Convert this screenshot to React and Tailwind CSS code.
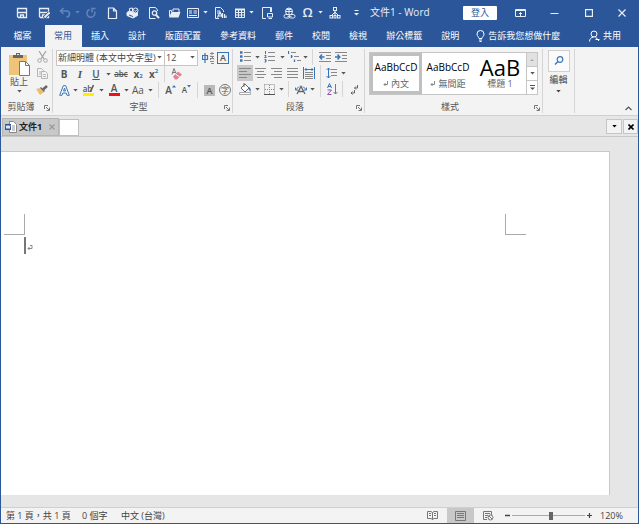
import React, { useState } from "react";
import clsx from "clsx";

const Svg = ({ w = 12, h = 12, className, children }) => (
  <svg
    width={w}
    height={h}
    viewBox={`0 0 ${w} ${h}`}
    fill="none"
    stroke="currentColor"
    aria-hidden="true"
    className={clsx("shrink-0", className)}
  >
    {children}
  </svg>
);

const Caret = () => (
  <Svg w={5} h={3}>
    <path d="M.3 0h4.400L2.500 2.600z" fill="currentColor" stroke="none" />
  </Svg>
);

// Button that centres its icon in a slot of the given width
const Tool = ({ label, className, children, ...props }) => (
  <button
    type="button"
    aria-label={label}
    title={label}
    className={clsx("flex shrink-0 items-center justify-center", className)}
    {...props}
  >
    {children}
  </button>
);

const Drop = ({ className = "w-2", label = "更多選項" }) => (
  <Tool label={label} className={clsx("h-4", className)}>
    <Caret />
  </Tool>
);

const Sep = ({ className }) => <div className={clsx("h-4 w-px shrink-0 bg-[#d5d5d5]", className)} />;

/* ---------- title bar ---------- */

const Save = ({ pen }) => (
  <Svg>
    <path d="M1.500 1.500h9v9h-8l-1-1z" strokeWidth="1.300" />
    <path d="M2 5.500h8M4.500 10.500v-2.500h3v2.500" strokeWidth="1.300" />
    {pen && <path d="M6 11l5.500-5.500" stroke="#2b579a" strokeWidth="3.500" />}
    {pen && <path d="M6.500 10.500l5-5" strokeWidth="1.800" />}
  </Svg>
);

const DocLines = () => (
  <Svg w={13}>
    <path d="M5 11.500H1.500V.5h5l3 3V5M3 4h3M3 6h2" />
    <path d="M3.500 10.500L6 5l2.500 5.500M4.500 9h3M8.500 6v5M10.500 7v4M12 8.500V11" strokeWidth="1.200" />
  </Svg>
);

function TitleBar() {
  return (
    <header className="flex h-6 shrink-0 items-center bg-[#2b579a] pl-[10px] pt-px text-[#e9eef6]">
      <Tool label="儲存檔案" className="w-[22px]"><Save /></Tool>
      <Tool label="另存新檔" className="w-[22px]"><Save pen /></Tool>
      <Tool label="復原" className="w-[19px] text-[#6485b8]">
        <Svg>
          <path d="M4.500 1L1.500 4l3 3M2 4h5.500a3 3 0 0 1 0 6" strokeWidth="1.500" />
        </Svg>
      </Tool>
      <Tool label="復原清單" className="w-[6px] text-[#6485b8]"><Caret /></Tool>
      <Tool label="取消復原" className="w-[21px] text-[#6485b8]">
        <Svg>
          <path d="M9.500 4.500a4 4 0 1 1-5-2M10.500 1.500H7v4" strokeWidth="1.500" />
        </Svg>
      </Tool>
      <Tool label="新增" className="w-[21px]">
        <Svg><path d="M2.500 1h5l3 3v7.500h-8zM7.500 1v3h3" strokeWidth="1.200" /></Svg>
      </Tool>
      <Tool label="快速列印" className="w-[21px]">
        <Svg w={13}>
          <path d="M1 5.500l2.500-1.500 6 2 2-1v3.500L7 11 1 8.500z" fill="currentColor" />
          <path d="M3.500 4V1.500L6.500 1v3.500" />
          <circle cx="9.500" cy="3.500" r="2.500" fill="#2b579a" />
          <path d="M8.300 3.500l1 1 1.700-2" />
          <path d="M3 8l4 1.500" stroke="#2b579a" />
        </Svg>
      </Tool>
      <Tool label="預覽列印" className="w-[22px]">
        <Svg>
          <path d="M9.500 4V3L7.500 .5h-6v11h6" />
          <circle cx="6.500" cy="6" r="2.200" strokeWidth="1.300" />
          <path d="M8 7.800l3 3.400" strokeWidth="2" />
        </Svg>
      </Tool>
      <Tool label="開啟" className="w-[19px]">
        <Svg w={13}>
          <path d="M1.500 9.500v-6h2V5M5 4.500V2h6v3" />
          <path d="M1 10.500L3.500 5H12.500l-2 5.500z" fill="currentColor" stroke="none" />
        </Svg>
      </Tool>
      <Tool label="版面" className="w-[18px]">
        <Svg>
          <path d="M.5 1.500h11v9H.5z" />
          <path d="M2 4h3M2 6h3M2 8.500h8M6.500 4H10M6.500 6H10" />
        </Svg>
      </Tool>
      <Drop className="w-[7px]" />
      <Tool label="文件樣式" className="w-[22px]"><DocLines /></Tool>
      <Tool label="表格" className="w-[17px]">
        <Svg>
          <path d="M1.500 2.500h9v8h-9zM1.500 5.500h9M1.500 8h9M4.500 3v8M7.500 3v8" />
          <path d="M1 2.500h10" strokeWidth="2" />
        </Svg>
      </Tool>
      <Drop className="w-[7px]" />
      <Tool label="插入物件" className="w-[24px]">
        <Svg w={13}>
          <path d="M5 11.500H1.500V.5h8V5M9.500 .5h1V5" />
          <path d="M6.500 6.500h5v3.500h-5zM7.500 11.500h3.500" />
        </Svg>
      </Tool>
      <Tool label="超連結" className="w-[20px]">
        <Svg w={13}>
          <circle cx="6" cy="4.500" r="3.500" />
          <path d="M2.500 4.500h7M6 1v7M3.500 2.500h5" />
          <rect x="1" y="7.500" width="6" height="3.500" rx="1.700" fill="#2b579a" />
          <rect x="6" y="7.500" width="6" height="3.500" rx="1.700" fill="#2b579a" />
          <path d="M4.500 9.300h4" />
        </Svg>
      </Tool>
      <Tool label="符號" className="w-[17px] text-[13px] font-semibold leading-none">Ω</Tool>
      <Drop className="w-[9px]" />
      <Tool label="組織圖" className="w-[20px]">
        <Svg>
          <rect x="4.500" y=".5" width="3" height="3" />
          <path d="M6 4v2.500M6 5L2.500 8.500M6 5l3.500 3.500M6 6v2.500" />
          <rect x="1" y="8.500" width="2.500" height="2.500" />
          <rect x="5" y="8.500" width="2" height="2.500" />
          <rect x="8.500" y="8.500" width="2.500" height="2.500" />
        </Svg>
      </Tool>
      <Tool label="自訂快速存取工具列" className="w-[22px]">
        <Svg w={5} h={6}>
          <path d="M.5 .5h4" />
          <path d="M0 3h5L2.500 5.500z" fill="currentColor" stroke="none" />
        </Svg>
      </Tool>
      <h1 className="ml-[3px] shrink-0 whitespace-nowrap text-[10px]">文件1 - Word</h1>
      <button type="button" className="ml-auto h-[14px] w-[34px] shrink-0 rounded-[1px] bg-white text-[9px] leading-[14px] text-[#2b579a]">
        登入
      </button>
      <Tool label="功能區顯示選項" className="ml-[7px] w-[33px]">
        <Svg w={11} h={8}>
          <path d="M.5 .5h10v7H.5zM.5 1.500h10M5.500 7V3.500M4 5l1.500-1.500L7 5" />
        </Svg>
      </Tool>
      <Tool label="最小化" className="w-[35px]">
        <Svg w={9} h={8}><path d="M.5 4.500h8" /></Svg>
      </Tool>
      <Tool label="最大化" className="w-[33px]">
        <Svg w={8} h={8}><path d="M.5 .5h7v7h-7z" strokeWidth="1.300" /></Svg>
      </Tool>
      <Tool label="關閉" className="w-[33px]">
        <Svg w={8} h={8}><path d="M.5 .5l7 7M7.500 .5l-7 7" strokeWidth="1.200" /></Svg>
      </Tool>
    </header>
  );
}

/* ---------- ribbon tabs ---------- */

const TABS = ["常用", "插入", "設計", "版面配置", "參考資料", "郵件", "校閱", "檢視", "辦公標籤", "說明"];

function RibbonTabs() {
  const [active, setActive] = useState("常用");
  return (
    <nav className="flex h-[23px] shrink-0 items-stretch bg-[#2b579a] pt-px text-[9px] text-white">
      <button type="button" className="w-11 shrink-0 pr-px">檔案</button>
      {TABS.map((tab) => (
        <button
          key={tab}
          type="button"
          onClick={() => setActive(tab)}
          className={clsx(
            "shrink-0 whitespace-nowrap pl-[9px] pr-[10px]",
            tab === active && "bg-[#f3f3f3] text-[#2b579a]"
          )}
        >
          {tab}
        </button>
      ))}
      <button type="button" className="ml-[7px] flex shrink-0 items-center gap-[3px] whitespace-nowrap">
        <Svg w={9} h={12}>
          <path d="M3 8.500C3 7 1 6.300 1 4a3.500 3.500 0 0 1 7 0c0 2.300-2 3-2 4.500zM3 10h3M3.500 11.500h2" />
        </Svg>
        告訴我您想做什麼
      </button>
      <button type="button" className="ml-auto mr-[17px] flex shrink-0 items-center gap-[3px]">
        <Svg w={11} h={12}>
          <circle cx="5" cy="4" r="3" />
          <path d="M.5 11.500c0-2.500 1.500-4 4-4.500M6.500 7l3.500 4M6.500 9.500h4" />
        </Svg>
        共用
      </button>
    </nav>
  );
}

/* ---------- ribbon ---------- */

const Launcher = () => (
  <Svg w={6} h={6} className="text-[#777]">
    <path d="M.5 4V.5H4M2 2l3 3M5.500 2.500v3h-3" />
  </Svg>
);

const Group = ({ name, launcher = true, className, children }) => (
  <section
    aria-label={name}
    className={clsx("flex shrink-0 flex-col border-r border-[#d5d5d5] text-[#555]", className)}
  >
    <div className="h-[52px]">{children}</div>
    <div className="flex h-[13px] items-center text-[9px] leading-3">
      <span className="flex-1 pr-0.5 text-center">{name}</span>
      {launcher && <Tool label={`${name}設定`} className="mr-px w-2 pt-0.5"><Launcher /></Tool>}
    </div>
  </section>
);

const Row = ({ children }) => <div className="flex h-4 items-center leading-3">{children}</div>;

function ClipboardGroup() {
  return (
    <Group name="剪貼簿" className="w-[52px]">
      <div className="flex">
        <button type="button" className="flex w-9 flex-col items-center pt-1 text-[9px] leading-3">
          <Svg w={23} h={23}>
            <path d="M1 2h18v20H1z" fill="#eec477" stroke="none" />
            <path d="M5 2h3V0h4v2h3v3H5z" fill="#666" stroke="none" />
            <path d="M9 1.500h2" stroke="#f3f3f3" />
            <path d="M11.500 8.500h6l4 4v10h-10z" fill="#fff" stroke="#777" />
            <path d="M17.500 8.500v4h4" stroke="#777" />
          </Svg>
          貼上
          <span className="pt-0.5"><Caret /></span>
        </button>
        <div className="flex flex-col">
          <Tool label="剪下" className="h-4 w-[10px] text-[#a5a5a5]">
            <Svg w={11}>
              <path d="M2 0l5 8M9 0L4 8" strokeWidth="1.300" />
              <circle cx="2.500" cy="9.500" r="1.800" />
              <circle cx="8.500" cy="9.500" r="1.800" />
            </Svg>
          </Tool>
          <Tool label="複製" className="h-4 w-[10px] text-[#b5b5b5]">
            <Svg w={11} h={11}>
              <path d="M.5 .5h4l2 2v6h-6zM2 4h3M2 6h3" />
              <path d="M4.500 3.500h4l2 2v5h-6z" fill="#f3f3f3" />
              <path d="M6 6.500h3M6 8.500h3" />
            </Svg>
          </Tool>
          <Tool label="複製格式" className="h-[18px] w-[10px]">
            <Svg w={12} h={10}>
              <path d="M0 4l4-1 4 4-4 3z" fill="#eebd6b" stroke="none" />
              <path d="M4.500 2.500l4 4" stroke="#666" strokeWidth="1.500" />
              <path d="M7 4.500L11 1" stroke="#666" strokeWidth="2.500" />
            </Svg>
          </Tool>
        </div>
      </div>
    </Group>
  );
}

const FONTS = ["新細明體 (本文中文字型)", "標楷體"];
const SIZES = ["10", "12", "14"];

const Combo = ({ label, options, value, className }) => (
  <label className={clsx("relative flex h-4 items-center border border-[#c6c6c6] bg-white", className)}>
    <span className="sr-only">{label}</span>
    <select
      defaultValue={value}
      className="h-full w-full appearance-none bg-transparent pl-px text-[9px] leading-[14px] text-[#444] outline-none"
    >
      {options.map((o) => (
        <option key={o}>{o}</option>
      ))}
    </select>
    <span className="pointer-events-none absolute right-0.5"><Caret /></span>
  </label>
);

function FontGroup() {
  return (
    <Group name="字型" className="w-[180px] pl-[3px]">
      <div className="flex flex-col">
        <div className="flex h-[17px] items-center">
          <Combo label="字型" options={FONTS} value={FONTS[0]} className="w-[109px]" />
          <Combo label="字型大小" options={SIZES} value="12" className="-ml-px w-[34px]" />
          <Tool label="注音標示" className="ml-[3px] w-[14px]">
            <Svg w={13}>
              <path d="M.5 3.500h5v4h-5zM3 1v10" stroke="#3a74b8" strokeWidth="1.200" />
              <path d="M8 1.500h4M10 0v3M8 4.500h4M8 6.500h4M9 3.500l3 4M12 4L8 8M8 9.500h4M9 11.500h3" stroke="#888" />
            </Svg>
          </Tool>
          <Tool label="字元框線" className="ml-0.5 h-3 w-3 border border-[#3a74b8] text-[9px] font-semibold leading-[10px]">
            A
          </Tool>
        </div>
        <Row>
          <Tool label="粗體" className="w-4 text-[10px] font-bold">B</Tool>
          <Tool label="斜體" className="w-4 font-['Liberation_Serif',serif] text-[11px] font-bold italic">I</Tool>
          <Tool label="底線" className="w-4 text-[10px] font-semibold underline">U</Tool>
          <Drop />
          <Tool label="刪除線" className="w-[18px] text-[8px] font-semibold line-through">abc</Tool>
          <Tool label="下標" className="w-4 text-[10px] font-bold">
            x<sub className="text-[6px] text-[#3a74b8]">2</sub>
          </Tool>
          <Tool label="上標" className="w-[15px] text-[10px] font-bold">
            x<sup className="text-[6px] text-[#3a74b8]">2</sup>
          </Tool>
          <Sep className="ml-[3px]" />
          <Tool label="清除所有格式設定" className="ml-[5px] w-3">
            <Svg w={11}>
              <path d="M1 6.500l2-6 2 5M1.700 4.500h2.600" stroke="#777" />
              <path d="M2 8.500L7 3.500l4 3-5 5H4z" fill="#e77f92" stroke="none" />
              <path d="M4.500 6l4 3" stroke="#fff" />
            </Svg>
          </Tool>
        </Row>
        <Row>
          <Tool label="文字效果" className="w-4">
            <Svg w={11} h={11}>
              <path d="M.7 10.300L4.300 .7h2.400l3.600 9.600H8L7.200 8H3.800L3 10.300zM4.500 6h2L5.500 3z" fill="#fff" stroke="#3a74b8" />
            </Svg>
          </Tool>
          <Drop className="w-[6px]" />
          <Tool label="文字醒目提示色彩" className="ml-px w-[19px] flex-col">
            <span className="flex text-[8px] font-semibold leading-[9px]">
              ab
              <Svg w={4} h={8} className="-ml-0.5"><path d="M.5 7.500L3.500 1" strokeWidth="1.500" /></Svg>
            </span>
            <span className="h-[3px] w-[11px] bg-[#ffee00]" />
          </Tool>
          <Drop className="w-[6px]" />
          <Tool label="字型色彩" className="ml-px w-[18px] flex-col">
            <span className="text-[10px] font-semibold leading-[9px]">A</span>
            <span className="h-[3px] w-[11px] bg-[#ee1111]" />
          </Tool>
          <Drop className="w-[6px]" />
          <Tool label="大小寫轉換" className="w-[18px] text-[10px]">Aa</Tool>
          <Drop className="w-[6px]" />
          <Sep className="ml-[5px]" />
          <Tool label="放大字型" className="ml-1 w-[15px] text-[10px] font-semibold">
            A
            <Svg w={4} h={10}><path d="M0 2.500h4L2 0z" fill="#3a74b8" stroke="none" /></Svg>
          </Tool>
          <Tool label="縮小字型" className="w-[17px] text-[8px] font-semibold">
            A
            <Svg w={4} h={10}><path d="M0 0h4L2 2.500z" fill="#3a74b8" stroke="none" /></Svg>
          </Tool>
          <Sep className="ml-0.5" />
          <Tool label="字元網底" className="ml-[6px] h-[11px] w-[11px] bg-[#b9b9b9] text-[9px] font-semibold leading-[11px]">
            A
          </Tool>
          <Tool label="圍繞字元" className="ml-1 h-3 w-3 rounded-full border border-[#777] text-[8px] leading-[10px]">
            字
          </Tool>
        </Row>
      </div>
    </Group>
  );
}

const ALIGN = {
  left: "M0 1.500h12M0 4.500h8M0 7.500h12M0 10.500h8",
  center: "M0 1.500h11M2 4.500h7M0 7.500h11M2 10.500h7",
  right: "M0 1.500h11M3 4.500h8M0 7.500h11M3 10.500h8",
  justify: "M0 1.500h11M0 4.500h11M0 7.500h11M0 10.500h11",
};

const AlignIcon = ({ kind }) => (
  <Svg w={12} h={12} className="text-[#888]">
    <path d={ALIGN[kind]} />
  </Svg>
);

const Indent = ({ d }) => (
  <Svg w={12} h={11} className="text-[#888]">
    <path d="M0 .5h12M7 3.500h5M7 6.500h5M0 9.500h12" />
    <path d={d} stroke="#3a74b8" strokeWidth="1.500" />
  </Svg>
);

function ParagraphGroup() {
  const [align, setAlign] = useState("left");
  return (
    <Group name="段落" className="w-[132px] pl-1">
      <Row>
        <Tool label="項目符號" className="w-4">
          <Svg w={11} className="text-[#888]">
            <path d="M4 1.500h7M4 5.500h7M4 9.500h7" />
            <path d="M0 1.500h2.500M0 5.500h2.500M0 9.500h2.500" stroke="#3a74b8" strokeWidth="2.500" />
          </Svg>
        </Tool>
        <Drop />
        <Tool label="編號" className="w-[17px]">
          <Svg w={11} className="text-[#888]">
            <path d="M4 1.500h7M4 5.500h7M4 9.500h7" />
            <path d="M1.500 0v3M.5 4.500h1.500v1L.5 6.500h2M.5 8.500h1.500v2.500H.5M1 9.700h1" stroke="#3a74b8" />
          </Svg>
        </Tool>
        <Drop />
        <Tool label="多層次清單" className="w-4">
          <Svg w={13} className="text-[#888]">
            <path d="M3 1.500h5M6 5.500h5M9 9.500h4" />
            <path d="M.5 0v3M3.500 4v3M4.500 5.500H3M6.500 8.500v2.500" stroke="#3a74b8" strokeWidth="1.300" />
          </Svg>
        </Tool>
        <Drop className="w-[6px]" />
        <Sep className="ml-1" />
        <Tool label="減少縮排" className="ml-1 w-4"><Indent d="M5.500 5H.5M3 2.500L.7 5 3 7.500" /></Tool>
        <Tool label="增加縮排" className="w-4"><Indent d="M0 5h5M2.500 2.500L4.800 5l-2.300 2.500" /></Tool>
      </Row>
      <Row>
        {Object.keys(ALIGN).map((kind) => (
          <Tool
            key={kind}
            label={kind}
            aria-pressed={kind === align}
            onClick={() => setAlign(kind)}
            className={clsx("h-4 w-4", kind === align && "bg-[#c8c8c8]")}
          >
            <AlignIcon kind={kind} />
          </Tool>
        ))}
        <Tool label="分散對齊" className="w-4">
          <Svg w={12} h={12} className="text-[#888]">
            <path d="M.5 0v12M11.500 0v12M2 2.500h8M3.500 1L2 2.500 3.500 4M8.500 1L10 2.500 8.500 4" stroke="#3a74b8" />
            <path d="M2 5.500h8M2 7.500h8M2 9.500h8M2 11.500h8" />
          </Svg>
        </Tool>
        <Sep className="ml-[3px]" />
        <Tool label="行距" className="ml-1 w-[14px]">
          <Svg w={12} className="text-[#888]">
            <path d="M5 2.500h6M5 5.500h6M5 8.500h6" />
            <path d="M2.500 1v10M.5 3l2-2 2 2M.5 9l2 2 2-2" stroke="#3a74b8" />
          </Svg>
        </Tool>
        <Drop />
      </Row>
      <Row>
        <Tool label="網底" className="w-4">
          <Svg w={13} h={12}>
            <path d="M2 5l4-4 4 4-4 4z" fill="#fff" stroke="#666" />
            <path d="M5 0v4" stroke="#666" />
            <path d="M10 4c2 1 2 3 1.500 5-1-1-1-2-2.500-3.500z" fill="#3a74b8" stroke="none" />
            <path d="M.5 9.500h11v2H.5z" fill="#fff" stroke="#aaa" />
          </Svg>
        </Tool>
        <Drop />
        <Tool label="框線" className="w-4">
          <Svg w={11} h={11} className="text-[#888]">
            <path d="M.5 .5h10v9M.5 .5v9M5.500 1v9M1 5.500h9" strokeDasharray="1 1" />
            <path d="M0 10.500h11" stroke="#555" />
          </Svg>
        </Tool>
        <Drop />
        <Sep className="ml-[3px]" />
        <Tool label="亞洲方式配置" className="ml-1 w-4">
          <Svg w={12} h={11}>
            <path d="M2 10L6 2.500 10 10M3.500 7.500h5" stroke="#666" strokeWidth="1.300" />
            <path d="M.5 6L4 2.500M.5 3.500V6H3M11.500 6L8 2.500M11.500 3.500V6H9" stroke="#3a74b8" />
          </Svg>
        </Tool>
        <Drop className="w-[6px]" />
        <Sep className="ml-[5px]" />
        <Tool label="排序" className="ml-[5px] w-3">
          <Svg w={11} h={12}>
            <path d="M.5 5L2.500 .5l2 4.500M1 3.500h3" stroke="#3a74b8" />
            <path d="M.5 7h4l-4 4.500h4" stroke="#8b55a8" />
            <path d="M8.500 1v10M6.500 9l2 2 2-2" stroke="#777" />
          </Svg>
        </Tool>
        <Sep className="ml-[4px]" />
        <Tool label="顯示/隱藏編輯標記" className="ml-[5px] w-3">
          <Svg w={9} h={11}>
            <path d="M7.500 1v3h-3M6 2.500L4.500 4 6 5.500M4.500 6v3H1M2.500 7.500L1 9l1.500 1.500" stroke="#666" />
          </Svg>
        </Tool>
      </Row>
    </Group>
  );
}

const STYLES = [
  { name: "內文", mark: true, preview: "AaBbCcD" },
  { name: "無間距", mark: true, preview: "AaBbCcD" },
  { name: "標題 1", preview: "AaB", big: true },
];

const ReturnMark = () => (
  <Svg w={5} h={6} className="text-[#888]"><path d="M4.500 0v3.500H1M2.500 2L1 3.500 2.500 5" /></Svg>
);

function StylesGroup() {
  const [selected, setSelected] = useState("內文");
  return (
    <Group name="樣式" className="w-[178px] pl-1">
      <div className="flex pt-[3px]">
        <div className="flex h-[43px] w-[169px] border border-[#c6c6c6] bg-white">
          {STYLES.map((s) => (
            <button
              key={s.name}
              type="button"
              onClick={() => setSelected(s.name)}
              className={clsx(
                "flex flex-1 flex-col items-center border-[3px]",
                s.name === selected ? "border-[#c0c0c0]" : "border-transparent"
              )}
            >
              <span
                className={clsx(
                  "flex h-[22px] shrink-0 items-center whitespace-nowrap text-black",
                  s.big ? "text-[22px] leading-[22px]" : "text-[10px]"
                )}
              >
                {s.preview}
              </span>
              <span className="flex items-center gap-[3px] whitespace-nowrap text-[9px] leading-3 text-[#666]">
                {s.mark && <ReturnMark />}
                {s.name}
              </span>
            </button>
          ))}
          <div className="flex w-[11px] flex-col divide-y divide-[#c6c6c6] border-l border-[#c6c6c6]">
            <Tool label="上一列" className="flex-1 bg-[#e1e1e1] text-[#aaa]">
              <Svg w={4} h={2}><path d="M0 2h4L2 0z" fill="currentColor" stroke="none" /></Svg>
            </Tool>
            <Tool label="下一列" className="flex-1"><Caret /></Tool>
            <Tool label="其他" className="flex-1">
              <Svg w={5} h={6}>
                <path d="M0 .5h5" />
                <path d="M0 2.500h5L2.500 5z" fill="currentColor" stroke="none" />
              </Svg>
            </Tool>
          </div>
        </div>
      </div>
    </Group>
  );
}

function Ribbon() {
  return (
    <div className="flex h-[69px] shrink-0 border-b border-[#d0d0d0] bg-[#f3f3f3] py-0.5">
      <ClipboardGroup />
      <FontGroup />
      <ParagraphGroup />
      <StylesGroup />
      <section className="w-8 shrink-0 border-r border-[#d5d5d5] text-[#444]">
        <button type="button" className="flex w-full flex-col items-center text-[9px] leading-3">
          <span className="mt-px flex h-[22px] w-[22px] items-center justify-center border border-[#d0d0d0] bg-[#fbfbfb]">
            <Svg w={10} h={10} className="text-[#3a74b8]">
              <circle cx="6" cy="3.500" r="2.800" strokeWidth="1.200" />
              <path d="M4 5.500L1 8.500" strokeWidth="1.500" />
            </Svg>
          </span>
          <span className="pb-1 pt-0.5">編輯</span>
          <Caret />
        </button>
      </section>
      <Tool label="摺疊功能區" className="mb-0.5 ml-auto mr-[7px] w-[6px] self-end text-[#555]">
        <Svg w={7} h={5}><path d="M.5 4l3-3 3 3" strokeWidth="1.200" /></Svg>
      </Tool>
    </div>
  );
}

/* ---------- document tabs ---------- */

function DocumentTabs() {
  return (
    <div className="flex h-[21px] shrink-0 items-end border-b border-[#c8c8c8] bg-[#e6e6e6] pl-px">
      <div className="flex h-[18px] w-[57px] items-center border border-[#b5b5b5] bg-[#c8c8c8] pl-[2px]">
        <Svg w={12} h={12}>
          <path d="M4.500 .5h4l3 3v8h-7z" fill="#fff" stroke="#888" />
          <path d="M7 5h3M7 7h3M7 9h3" stroke="#999" />
          <path d="M0 3h6v6H0z" fill="#2b579a" stroke="none" />
          <path d="M1 4.500L2 7.500l1-3 1 3 1-3" stroke="#fff" />
        </Svg>
        <span className="ml-0.5 whitespace-nowrap text-[9px] font-bold leading-4 text-[#222]">文件1</span>
        <Tool label="關閉分頁" className="ml-auto mr-[3px] text-[#999]">
          <Svg w={6} h={6}><path d="M.5 .5l5 5M5.500 .5l-5 5" strokeWidth="1.200" /></Svg>
        </Tool>
      </div>
      <button type="button" aria-label="新增分頁" className="h-[17px] w-5 border border-[#c0c0c0] bg-white" />
      <div className="mb-0.5 ml-auto flex gap-px text-black">
        <Tool label="分頁清單" className="h-[15px] w-4 border border-[#c6c6c6] bg-[#f3f3f3]"><Caret /></Tool>
        <Tool label="關閉文件" className="h-[15px] w-[15px] border border-[#c6c6c6] bg-[#f3f3f3]">
          <Svg w={6} h={6}><path d="M.5 .5l5 5M5.500 .5l-5 5" strokeWidth="1.600" /></Svg>
        </Tool>
      </div>
    </div>
  );
}

/* ---------- page and status bar ---------- */

function Workspace() {
  return (
    <main className="flex min-h-0 flex-1 flex-col bg-[#e6e6e6] pb-3 pr-7 pt-[14px]">
      <article className="flex-1 border-r border-t border-[#c8c8c8] bg-white pl-[3px] pt-[62px]">
        <div className="flex justify-between pr-[83px]">
          <div className="h-[21px] w-[21px] border-b border-r border-[#aaa]" />
          <div className="h-[21px] w-[21px] border-b border-l border-[#aaa]" />
        </div>
        <div className="ml-5 mt-0.5 flex items-center gap-px text-[#888]">
          <span className="h-[17px] w-[2px] bg-[#777]" />
          <Svg w={6} h={6} className="mt-1">
            <path d="M3 .5h2v3H1M2.500 2L1 3.500 2.500 5" />
          </Svg>
        </div>
      </article>
    </main>
  );
}

function StatusBar() {
  return (
    <footer className="flex h-4 shrink-0 items-center border-t border-[#d0d0d0] bg-[#f3f3f3] pl-[5px] pr-[14px] text-[9px] text-[#444]">
      <span className="w-[76px] shrink-0 whitespace-nowrap">第 1 頁，共 1 頁</span>
      <span className="w-[39px] shrink-0 whitespace-nowrap">0 個字</span>
      <span className="shrink-0 whitespace-nowrap">中文 (台灣)</span>
      <Tool label="閱讀模式" className="ml-auto w-[29px] text-[#777]">
        <Svg w={11} h={9}>
          <path d="M5.500 1.500v7M.5 .5H4l1.500 1L7 .5h3.500v7H7l-1.500 1-1.500-1H.5zM2 2.500h2M2 4.500h2M7 2.500h2M7 4.500h2" />
        </Svg>
      </Tool>
      <Tool label="整頁模式" className="h-[15px] w-[27px] bg-[#c8c8c8] text-[#777]">
        <Svg w={11} h={10}><path d="M.5 .5h10v9H.5zM2 2.500h7M2 4.500h7M2 6.500h7" /></Svg>
      </Tool>
      <Tool label="Web 版面配置" className="w-[29px] text-[#777]">
        <Svg w={11} h={10}>
          <path d="M4 8.500H.5v-8h8V4M2 2.500h5M2 4.500h3M2 6.500h2" />
          <circle cx="7.500" cy="6.500" r="2.500" />
          <path d="M6 5l3 3" />
        </Svg>
      </Tool>
      <Tool label="縮小" className="w-[9px]">
        <Svg w={5} h={5}><path d="M0 2.500h5" strokeWidth="1.500" /></Svg>
      </Tool>
      <input
        type="range"
        aria-label="縮放"
        min="0"
        max="100"
        defaultValue="53"
        className="h-3 w-[73px] appearance-none bg-[linear-gradient(#aaa,#aaa)] bg-[length:100%_1px] bg-center bg-no-repeat [&::-webkit-slider-thumb]:h-2 [&::-webkit-slider-thumb]:w-1 [&::-webkit-slider-thumb]:appearance-none [&::-webkit-slider-thumb]:bg-[#666]"
      />
      <Tool label="放大" className="w-[9px]">
        <Svg w={5} h={5}><path d="M0 2.500h5M2.500 0v5" strokeWidth="1.200" /></Svg>
      </Tool>
      <span className="ml-[6px] w-6 shrink-0">120%</span>
    </footer>
  );
}

export default function App() {
  return (
    <div className="flex h-screen flex-col overflow-hidden border-x border-b border-[#2b579a] bg-[#f3f3f3] font-['Open_Sans','Noto_Sans_CJK_TC',sans-serif]">
      <TitleBar />
      <RibbonTabs />
      <Ribbon />
      <DocumentTabs />
      <Workspace />
      <StatusBar />
    </div>
  );
}
